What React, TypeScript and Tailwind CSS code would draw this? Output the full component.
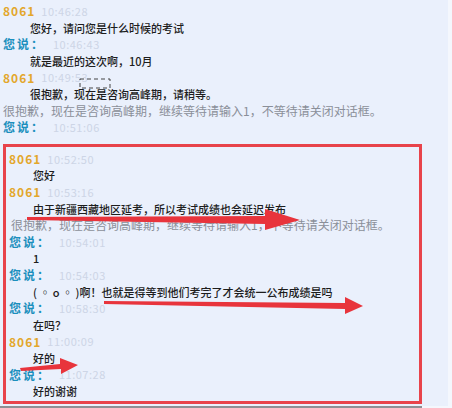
const font = { fontFamily: '"Noto Sans CJK SC", "Liberation Sans", sans-serif' }

type Line =
  | { kind: 'agent'; time: string }
  | { kind: 'me'; time: string }
  | { kind: 'msg'; text: string; indent: string }
  | { kind: 'sys'; indent: string }

const SYS = '很抱歉，现在是咨询高峰期，继续等待请输入1，不等待请关闭对话框。'

const Row = ({ line }: { line: Line }) => {
  if (line.kind === 'agent')
    return (
      <div className="flex h-[16.6px] items-center gap-[6px] leading-none whitespace-nowrap">
        <span className="text-[12px] font-bold tracking-[1px] text-[#e3a72c]">8061</span>
        <span className="text-[11px] tracking-[0.5px] text-[#cdd5e6]">{line.time}</span>
      </div>
    )
  if (line.kind === 'me')
    return (
      <div className="flex h-[16.6px] items-center leading-none whitespace-nowrap">
        <span className="w-[50px] shrink-0 text-[12px] font-bold tracking-[2px] text-[#1c8fbd]">您说：</span>
        <span className="text-[11px] tracking-[0.5px] text-[#cdd5e6]">{line.time}</span>
      </div>
    )
  if (line.kind === 'sys')
    return (
      <div className={`h-[16.6px] text-[12px] leading-[16.6px] whitespace-nowrap text-[#8a8f99] ${line.indent}`}>
        {SYS}
      </div>
    )
  return (
    <div className={`h-[16.6px] text-[11px] font-medium leading-[16.6px] whitespace-nowrap text-[#1d1d1d] ${line.indent}`}>
      {line.text}
    </div>
  )
}

const before: Line[] = [
  { kind: 'agent', time: '10:46:28' },
  { kind: 'msg', text: '您好，请问您是什么时候的考试', indent: 'pl-[27px]' },
  { kind: 'me', time: '10:46:43' },
  { kind: 'msg', text: '就是最近的这次啊，10月', indent: 'pl-[27px]' },
  { kind: 'agent', time: '10:49:53' },
  { kind: 'msg', text: '很抱歉，现在是咨询高峰期，请稍等。', indent: 'pl-[27px]' },
  { kind: 'sys', indent: 'pl-0' },
  { kind: 'me', time: '10:51:06' },
]

const boxed: Line[] = [
  { kind: 'agent', time: '10:52:50' },
  { kind: 'msg', text: '您好', indent: 'pl-[24px]' },
  { kind: 'agent', time: '10:53:16' },
  { kind: 'msg', text: '由于新疆西藏地区延考，所以考试成绩也会延迟发布', indent: 'pl-[24px]' },
  { kind: 'sys', indent: 'pl-[2px]' },
  { kind: 'me', time: '10:54:01' },
  { kind: 'msg', text: '1', indent: 'pl-[24px]' },
  { kind: 'me', time: '10:54:03' },
  { kind: 'msg', text: '( ◦ o ◦ )啊！也就是得等到他们考完了才会统一公布成绩是吗', indent: 'pl-[24px]' },
  { kind: 'me', time: '10:58:30' },
  { kind: 'msg', text: '在吗？', indent: 'pl-[24px]' },
  { kind: 'agent', time: '11:00:09' },
  { kind: 'msg', text: '好的', indent: 'pl-[24px]' },
  { kind: 'me', time: '11:07:28' },
  { kind: 'msg', text: '好的谢谢', indent: 'pl-[24px]' },
]

const Arrows = () => (
  <svg className="pointer-events-none absolute inset-0" width="452" height="408">
    {/* underline + arrow 1 */}
    <line x1="27" y1="218" x2="240" y2="219" stroke="#9b1c24" strokeWidth="1.5" />
    <polygon points="27,217 265,216 265,209 300,220 265,230 265,224 27,220" fill="#e8343c" />
    {/* arrow 2 */}
    <polygon points="104,301 345,303 345,297 363,306 345,314 345,309 104,304" fill="#e8343c" />
    {/* arrow 3 */}
    <polygon points="20,368 60,364 60,358 78,365 61,374 61,369 21,371" fill="#e8343c" />
    {/* dashed marker */}
    <rect x="80" y="79" width="30" height="9" fill="none" stroke="#444" strokeWidth="1" strokeDasharray="4 3" />
  </svg>
)

export default function App() {
  return (
    <div className="relative h-[408px] w-[452px] overflow-hidden bg-[#f4f7fd]" style={font}>
      <div className="h-[406px] w-[448px] bg-[#eaf0fc] pt-[3px]">
        <div className="pl-[3px]">
          {before.map((l, i) => (
            <Row key={i} line={l} />
          ))}
        </div>
        <div className="mt-[8px] ml-[3px] w-[419px] border-[3px] border-[#e8434b] pt-[4px] pl-[3px] pb-[1px]">
          {boxed.map((l, i) => (
            <Row key={i} line={l} />
          ))}
        </div>
      </div>
      <div className="h-[2px] w-[422px] bg-[#8d8f94]" />
      <Arrows />
    </div>
  )
}
